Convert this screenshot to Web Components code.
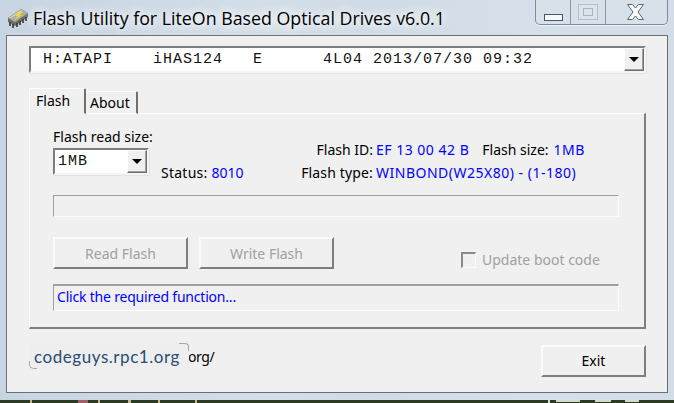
<!DOCTYPE html>
<html>
<head>
<meta charset="utf-8">
<title>Flash Utility</title>
<style>
	html, body { margin: 0; padding: 0; background: #2c3a24; }
	body { width: 674px; height: 403px; overflow: hidden; font: 14px "Noto Sans", sans-serif; color: #000; }
	.blue { color: #0000ff; letter-spacing: -.2px; }
</style>
</head>
<body>
<flash-window caption="Flash Utility for LiteOn Based Optical Drives v6.0.1">
	<drop-list wide value="H:ATAPI    iHAS124   E      4L04 2013/07/30 09:32"></drop-list>
	<tab-panel>
		<flash-info></flash-info>
		<sunken-box></sunken-box>
		<div style="display:flex;align-items:flex-end;margin-top:20px;height:32px">
			<push-button disabled label="Read Flash"></push-button>
			<push-button disabled label="Write Flash" style="margin-left:11px"></push-button>
			<check-box label="Update boot code" style="margin-left:127px"></check-box>
		</div>
		<sunken-box thick style="margin-top:15px"><span class="blue">Click the required function...</span></sunken-box>
	</tab-panel>
	<bottom-row></bottom-row>
</flash-window>

<script>
class FlashWindow extends HTMLElement {
	constructor() {
		super();
		this.shadow = this.attachShadow({mode: 'open'});
	}
	connectedCallback() {
		this.shadow.innerHTML = `
		<style>
		:host { display: flex; flex-direction: column; width: 674px; height: 403px;
			background: linear-gradient(90deg, #c7d5e2 0, #d3dee8 40%, #cfdbe6 55%, #d6e0ea 80%, #d2dde8 100%); }
		.title { display: flex; height: 35px; box-sizing: border-box; position: relative; }
		.icon { margin: 7px 0 0 7px; width: 22px; height: 21px; flex: none; }
		.caption { margin: 3px 0 0 4px; font: 17.8px/31px "Open Sans", sans-serif; color: #000; white-space: pre;
			text-shadow: 0 0 8px #fff, 0 0 12px #fff, 0 0 16px #fff; }
		.controls { position: absolute; left: 535px; top: 0; width: 133px; height: 25px; box-sizing: border-box; display: flex;
			border: 1px solid #7e8b9a; border-top: 0; border-radius: 0 0 5px 5px; background: #d7e1ea; box-shadow: 0 1px 0 #eef3f7; }
		.controls div { display: flex; align-items: flex-start; justify-content: center; box-sizing: border-box; }
		.controls .min { width: 35px; border-right: 1px solid #8d99a6; }
		.controls .max { width: 35px; border-right: 1px solid #8d99a6; }
		.controls .cls { flex: 1; }
		.client { margin: 0 6px; height: 358px; box-sizing: border-box; background: #f0f0f0;
			border: 1px solid #6b6f73; padding: 10px 0 0 22px; }
		.desk { flex: 1; margin-top: 7px; background: #2c3a24; display: block; }
		</style>
		<div class="title">
			<svg class="icon" viewBox="0 0 22 21">
				<path d="M1 11 L14 2 L21 6 L21 10 L8 19 L1 15 Z" fill="#6d6d66"/>
				<path d="M1 11 L14 2 L21 6 L8 15 Z" fill="#aeaea4"/>
				<path d="M2 11 L14 3 L15 4 L4 11 Z" fill="#d5d5cc"/>
				<path d="M14 4 L8 9 L11 9 L7 13 L15 8 L12 8 L16 5 Z" fill="#f2e21c"/>
				<path d="M3 15 V19 M6 17 V21 M10 16 V20 M13 14 V18 M16 12 V16 M19 10 V14" stroke="#34342f" stroke-width="1.6"/>
			</svg>
			<div class="caption">${this.getAttribute('caption')}</div>
			<div class="controls">
				<div class="min">
					<svg width="19" height="7" style="margin-top:14px"><rect x=".5" y=".5" width="18" height="6" fill="#f7f9fb" stroke="#4c5561"/></svg>
				</div>
				<div class="max">
					<svg width="20" height="16" style="margin-top:4px"><rect x=".5" y=".5" width="19" height="15" fill="#dbe3eb" stroke="#b6bfc8"/><rect x="5.5" y="4.5" width="9" height="7" fill="none" stroke="#a9b3bd"/></svg>
				</div>
				<div class="cls">
					<svg width="19" height="16" style="margin:4px 3px 0 0"><path d="M1.5 .5 H6.5 L9.5 4 L12.5 .5 H17.5 L12 8 L17.5 15.5 H12.5 L9.5 12 L6.5 15.5 H1.5 L7 8 Z" fill="#f6f8fa" stroke="#5a6470"/></svg>
				</div>
			</div>
		</div>
		<div class="client"><slot></slot></div>
		<svg class="desk" width="674" height="3">
			<g fill="#c9b58a"><rect x="30" y="0" width="2" height="3"/><rect x="98" y="0" width="2" height="3"/><rect x="128" y="0" width="3" height="3"/><rect x="158" y="0" width="2" height="3"/><rect x="195" y="0" width="2" height="3"/></g>
			<rect x="78" y="0" width="10" height="3" fill="#a0606a"/>
			<g fill="#d8d8d0"><rect x="548" y="0" width="2" height="3"/><rect x="556" y="0" width="24" height="2"/><rect x="595" y="0" width="16" height="2"/><rect x="625" y="0" width="14" height="2"/></g>
		</svg>`;
	}
}

class DropList extends HTMLElement {
	constructor() {
		super();
		this.shadow = this.attachShadow({mode: 'open'});
	}
	connectedCallback() {
		let wide = this.hasAttribute('wide');
		this.shadow.innerHTML = `
		<style>
		:host { display: flex; box-sizing: border-box; height: 27px; width: ${wide ? 617 : 96}px; background: #fff;
			border: 2px solid; border-color: #7e7e7e #f4f4f4 #f4f4f4 #7e7e7e; box-shadow: 1px 1px 0 #e3e3e3; }
		.val { flex: 1; font: 15px/20px "Liberation Mono", monospace; letter-spacing: 1px; white-space: pre; color: #111;
			padding: 2px 0 0 ${wide ? 12 : 3}px; }
		.btn { width: 20px; box-sizing: border-box; background: #f0f0f0; display: flex; align-items: center; justify-content: center;
			border: 1px solid; border-color: #fff #6f6f6f #6f6f6f #fff; box-shadow: inset -1px -1px 0 #a0a0a0; }
		.btn i { width: 0; height: 0; border: 5px solid transparent; border-top: 5px solid #000; border-bottom: 0; }
		</style>
		<div class="val">${this.getAttribute('value')}</div>
		<div class="btn"><i></i></div>`;
	}
}

class TabPanel extends HTMLElement {
	constructor() {
		super();
		this.shadow = this.attachShadow({mode: 'open'});
	}
	connectedCallback() {
		this.shadow.innerHTML = `
		<style>
		:host { display: block; margin-top: 15px; width: 617px; }
		.tabs { display: flex; align-items: flex-end; height: 26px; position: relative; z-index: 1; margin-bottom: -1px; }
		.tab { box-sizing: border-box; background: #f0f0f0; white-space: nowrap; line-height: 19px; }
		.on { width: 57px; height: 26px; padding: 2px 0 0 6px; border: 1px solid; border-color: #fff #6f6f6f #f0f0f0 #fff; border-right-width: 2px; border-radius: 2px 2px 0 0; }
		.off { width: 52px; height: 23px; padding: 1px 0 0 3px; border: 1px solid; border-color: #fff #6f6f6f #fff #f0f0f0; border-right-width: 2px; border-radius: 0 2px 0 0; }
		.body { height: 216px; box-sizing: border-box; border: 1px solid; border-color: #fff #7e7e7e #7e7e7e #fff; border-width: 1px 2px 2px 1px; padding: 13px 25px 0 23px; }
		</style>
		<div class="tabs"><div class="tab on">Flash</div><div class="tab off">About</div></div>
		<div class="body"><slot></slot></div>`;
	}
}

class FlashInfo extends HTMLElement {
	constructor() {
		super();
		this.shadow = this.attachShadow({mode: 'open'});
	}
	connectedCallback() {
		this.shadow.innerHTML = `
		<style>
		:host { display: flex; height: 68px; white-space: nowrap; line-height: 19px; }
		.size { width: 96px; flex: none; }
		.size div { margin-bottom: 2px; }
		.status { margin: 36px 0 0 12px; width: 100px; flex: none; letter-spacing: .25px; }
		.lines { margin: 13px 0 0 0; }
		.row { display: flex; height: 23px; }
		.k { width: 115px; text-align: right; padding-right: 3px; box-sizing: border-box; flex: none; }
		.t { letter-spacing: .15px; }
		.b { color: #0000ff; letter-spacing: .5px; }
		.status .b { letter-spacing: 0; }
		</style>
		<div class="size">
			<div>Flash read size:</div>
			<drop-list value="1MB"></drop-list>
		</div>
		<div class="status">Status: <span class="b">8010</span></div>
		<div class="lines">
			<div class="row"><span class="k">Flash ID:</span><span class="b">EF 13 00 42 B</span><span style="margin:0 5px 0 13px">Flash size:</span><span class="b">1MB</span></div>
			<div class="row"><span class="k t">Flash type:</span><span class="b">WINBOND(W25X80) - (1-180)</span></div>
		</div>`;
	}
}

class SunkenBox extends HTMLElement {
	constructor() {
		super();
		this.shadow = this.attachShadow({mode: 'open'});
	}
	connectedCallback() {
		let thick = this.hasAttribute('thick');
		this.shadow.innerHTML = `
		<style>
		:host { display: block; box-sizing: border-box; width: 566px; height: ${thick ? 27 : 22}px;
			border: 1px solid; border-color: #9f9f9f #fbfbfb #fbfbfb #9f9f9f; border-top-width: ${thick ? 2 : 1}px;
			padding: 0 0 0 3px; line-height: 22px; white-space: nowrap; }
		</style>
		<slot></slot>`;
	}
}

class PushButton extends HTMLElement {
	constructor() {
		super();
		this.shadow = this.attachShadow({mode: 'open'});
	}
	connectedCallback() {
		let off = this.hasAttribute('disabled');
		let w = this.getAttribute('width') || 135;
		this.shadow.innerHTML = `
		<style>
		:host { display: flex; align-items: center; justify-content: center; box-sizing: border-box; width: ${w}px; height: 32px; flex: none;
			border: 2px solid; border-color: #fbfbfb #7e7e7e #7e7e7e #fbfbfb; color: ${off ? '#a0a0a0' : '#000'}; white-space: nowrap; }
		</style>
		${this.getAttribute('label')}`;
	}
}

class CheckBox extends HTMLElement {
	constructor() {
		super();
		this.shadow = this.attachShadow({mode: 'open'});
	}
	connectedCallback() {
		this.shadow.innerHTML = `
		<style>
		:host { display: flex; align-items: center; color: #a0a0a0; white-space: nowrap; height: 16px; margin-bottom: 1px; }
		i { width: 15px; height: 16px; box-sizing: border-box; border: 1px solid; border-color: #8a8a8a #fbfbfb #fbfbfb #8a8a8a; border-width: 2px 1px 1px 2px; margin-right: 6px; }
		span { padding-bottom: 2px; }
		</style>
		<i></i><span>${this.getAttribute('label')}</span>`;
	}
}

class BottomRow extends HTMLElement {
	constructor() {
		super();
		this.shadow = this.attachShadow({mode: 'open'});
	}
	connectedCallback() {
		this.shadow.innerHTML = `
		<style>
		:host { display: flex; width: 617px; height: 48px; align-items: flex-start; }
		.link { display: flex; margin-top: 14px; line-height: 28px; white-space: nowrap; }
		.logo { position: relative; width: 160px; height: 26px; box-sizing: border-box; background: #eeeeee; padding-left: 5px;
			font: 17px/28px Lato, sans-serif; color: #2a4c72; letter-spacing: .55px; }
		.logo:before { content: ""; position: absolute; left: 0; bottom: 0; width: 7px; height: 7px; border: solid #a8a8a8; border-width: 0 0 1px 1px; border-radius: 0 0 0 5px; }
		.logo:after { content: ""; position: absolute; right: 0; top: 0; width: 9px; height: 7px; border: solid #a8a8a8; border-width: 1px 1px 0 0; border-radius: 0 4px 0 0; }
		.rest { margin-left: -1px; font-size: 14px; letter-spacing: -.4px; }
		.exit { margin: 16px 0 0 auto; padding-bottom: 1px; }
		</style>
		<div class="link"><div class="logo">codeguys.rpc1.org</div><div class="rest">org/</div></div>
		<push-button class="exit" width="105" label="Exit"></push-button>`;
	}
}

if ('customElements' in window) {
	customElements.define('push-button', PushButton);
	customElements.define('drop-list', DropList);
	customElements.define('sunken-box', SunkenBox);
	customElements.define('check-box', CheckBox);
	customElements.define('flash-info', FlashInfo);
	customElements.define('bottom-row', BottomRow);
	customElements.define('tab-panel', TabPanel);
	customElements.define('flash-window', FlashWindow);
}
</script>
</body>
</html>
